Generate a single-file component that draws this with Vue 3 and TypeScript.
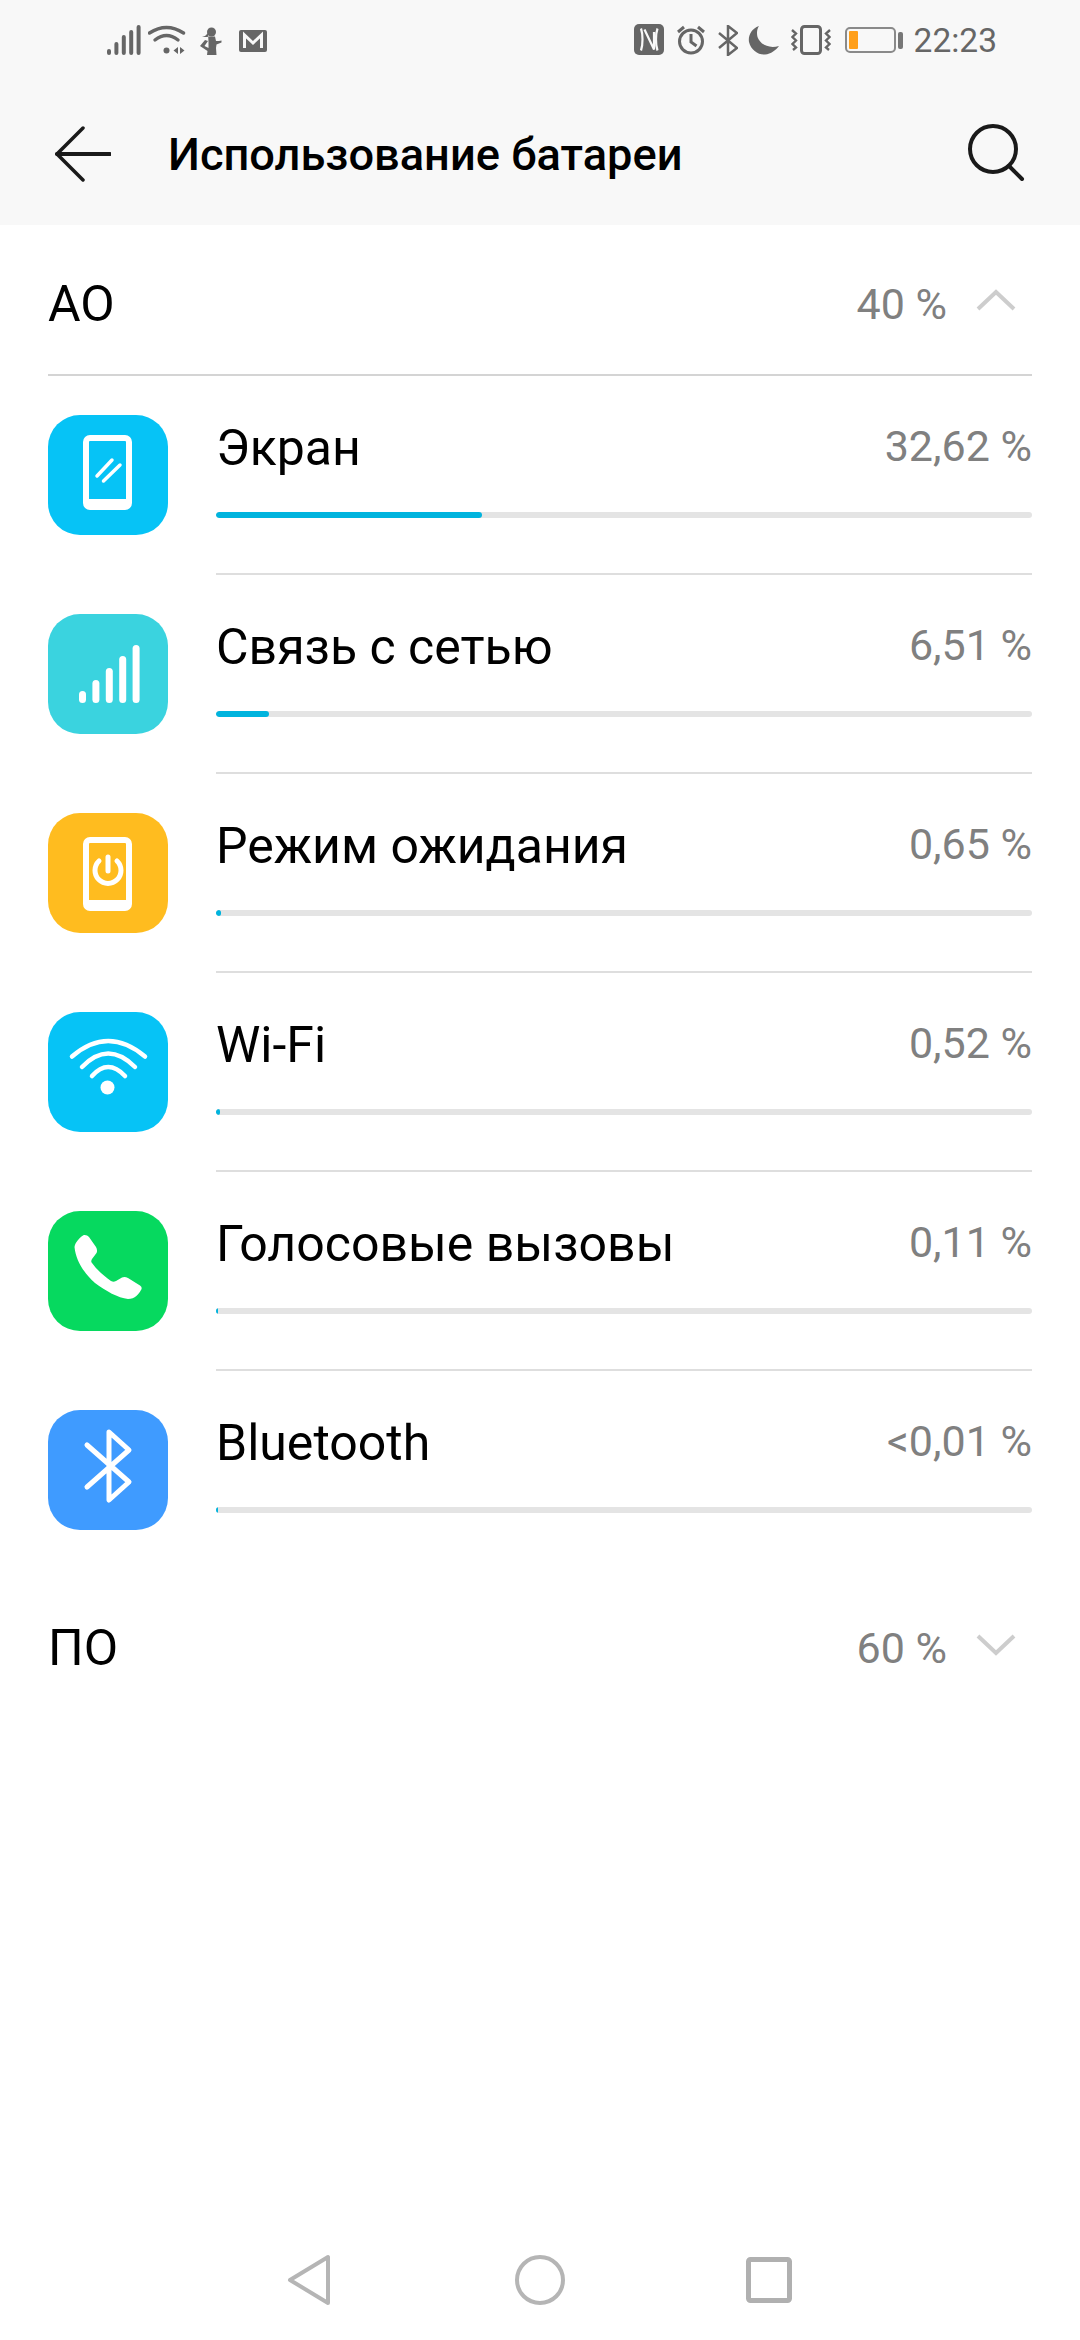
<template>
  <div class="screen">
    <div class="top">
      <div class="status">
        <div class="status-left">
          <svg class="si" width="34" height="32" viewBox="0 0 34 32">
            <rect v-for="(h, i) in signalBars" :key="i" :x="i * 7.4" :y="31 - h" width="4" :height="h" rx="2" fill="#666" />
          </svg>
          <svg class="si wifi-s" width="38" height="32" viewBox="0 0 38 32" fill="none" stroke="#666" stroke-width="3.4">
            <path d="M1.5 9Q18.5-2 35.5 9" stroke-linecap="round" />
            <path d="M7 16Q18.5 7 30 16" stroke-linecap="round" />
            <circle cx="18.5" cy="26.5" r="3" fill="#666" stroke="none" />
            <path d="M30 23v7l-4.500-3.500zM32 23v7l4.500-3.500z" fill="#666" stroke="none" />
          </svg>
          <svg class="si fig" width="22" height="28" viewBox="0 0 22 28">
            <circle cx="11.500" cy="5" r="4.500" fill="#666" />
            <path d="M8 6 5 9 2 10 7 10 9 9.500 15 9.500 16 14 19 14 21.500 13.500 21.500 15.500 16.500 17.500 16 21 16.500 28 7 28 7.500 24 0 19 5 13 8 14 4.500 19 8.500 21 8.500 15Z" fill="#666" />
          </svg>
          <svg class="si mail" width="28" height="22" viewBox="0 0 28 22">
            <rect width="28" height="22" rx="2" fill="#666" />
            <path d="M5.500 18V5L14 13 22.500 5V18" fill="none" stroke="#f8f8f8" stroke-width="3" />
          </svg>
        </div>
        <div class="status-right">
          <svg width="30" height="31" viewBox="0 0 30 31">
            <rect width="30" height="31" rx="5" fill="#666" />
            <path d="M7 4.500C9 10 9 21 7 26.500M10.500 5.500 20 25.500V8M23.500 4.500C21.500 10 21.500 21 23.500 26.500" fill="none" stroke="#f8f8f8" stroke-width="2.200" />
          </svg>
          <svg class="alarm" width="30" height="30" viewBox="0 0 30 30" fill="none" stroke="#666">
            <circle cx="15" cy="16.500" r="11.500" stroke-width="3" />
            <path d="M15 9v8l5.500 4M2 7l6-5M28 7l-6-5" stroke-width="3" />
          </svg>
          <svg class="bt" width="20" height="31" viewBox="0 0 20 31" fill="none" stroke="#666" stroke-width="2.500">
            <path d="M1 8 19 23 10 30V1L19 8 1 23" />
          </svg>
          <svg class="moon" width="31" height="30" viewBox="0 0 31 30">
            <path d="M11 1C3 4 0 11 1 17 3 25 10 30 17 29.500 23 29 28 25 31 21 20 24 12 19 9.500 12 8.500 8 9 4 11 1Z" fill="#666" />
          </svg>
          <svg class="vib" width="40" height="30" viewBox="0 0 40 30" fill="none" stroke="#666" stroke-width="3">
            <rect x="10.500" y="1.500" width="19" height="27" rx="3" />
            <path d="M1 5 5 8.500 1.500 12 5 15.500 1.500 19 5 22.500 2 25M39 5 35 8.500 38.500 12 35 15.500 38.500 19 35 22.500 38 25" stroke-width="2.400" />
          </svg>
          <div class="battery">
            <div class="battery-body"><div class="battery-fill" /></div>
            <div class="battery-tip" />
          </div>
          <span class="clock">22:23</span>
        </div>
      </div>
      <div class="toolbar">
        <svg class="back" width="56" height="56" viewBox="0 0 56 56" fill="none" stroke="#1a1a1a" stroke-width="4" stroke-linecap="round">
          <path d="M28 2 2 28 28 54" stroke-width="3.500" />
          <path d="M2 28H55" />
        </svg>
        <h1 class="title">Использование батареи</h1>
        <svg class="search" width="58" height="58" viewBox="0 0 58 58" fill="none" stroke="#1a1a1a" stroke-width="4" stroke-linecap="round">
          <circle cx="26" cy="26" r="23" />
          <path d="M42 43 55 56" />
        </svg>
      </div>
    </div>

    <div class="section-head first">
      <span class="section-name">АО</span>
      <span class="section-value">40 %</span>
      <svg class="chev up" width="40" height="22" viewBox="0 0 40 22" fill="none" stroke="#cdcdcd" stroke-width="4">
        <path d="M2 20 20 3 38 20" />
      </svg>
    </div>

    <div class="list">
      <div v-for="item in items" :key="item.name" class="row">
        <div class="app-icon" :style="{ background: item.color }">
          <svg v-if="item.icon === 'screen'" width="120" height="120" viewBox="0 0 120 120" fill="none" stroke="#fff">
            <rect x="38" y="23" width="43" height="69" rx="4" stroke-width="6" />
            <path d="M38 88H81" stroke-width="8" />
            <path d="M49 61 64 45M55.500 66 72 50" stroke-width="3.500" stroke-linecap="round" />
          </svg>
          <svg v-else-if="item.icon === 'signal'" width="120" height="120" viewBox="0 0 120 120">
            <rect v-for="(b, i) in networkBars" :key="i" :x="31 + i * 13.400" :y="89 - b" width="7" :height="b" rx="3.500" fill="#fff" />
          </svg>
          <svg v-else-if="item.icon === 'standby'" width="120" height="120" viewBox="0 0 120 120" fill="none" stroke="#fff">
            <rect x="38" y="27" width="43" height="68" rx="4" stroke-width="6" />
            <path d="M38 91H81" stroke-width="8" />
            <path d="M51 48A13 13 0 1 0 69 48" stroke-width="5" stroke-linecap="round" />
            <path d="M60 44V58" stroke-width="5" stroke-linecap="round" />
          </svg>
          <svg v-else-if="item.icon === 'wifi'" width="120" height="120" viewBox="0 0 120 120" fill="none" stroke="#fff" stroke-width="4.500" stroke-linecap="round">
            <path d="M24 44.500Q60 13.500 97 44.500" />
            <path d="M34 55Q60 28 87 55" />
            <path d="M44 64Q60 46 77 64" />
            <circle cx="59.500" cy="75.500" r="7" fill="#fff" stroke="none" />
          </svg>
          <svg v-else-if="item.icon === 'phone'" width="120" height="120" viewBox="0 0 120 120">
            <path d="M26.500 36C27 32 31 27 35 24.500 37 23.500 39.500 24.500 41 26L48 36C49 38 49.500 40 48.500 42L44 48C43 50 43 51 44 52 49 59 56 65 63 70 65 71 66 71 68 70L74 66.500C76 65.500 78 66 80 67L92 74.500C94 76 94 77.500 93 79 91 83 87 88 80 88 70 87 58 80 47 72 36 62 28 50 26.500 36Z" fill="#fff" />
          </svg>
          <svg v-else width="120" height="120" viewBox="0 0 120 120" fill="none" stroke="#fff" stroke-width="5" stroke-linecap="round" stroke-linejoin="round">
            <path d="M39 35 81 72 61 90V22L81 40 39 77" />
          </svg>
        </div>
        <div class="row-body">
          <div class="row-text">
            <span class="row-name">{{ item.name }}</span>
            <span class="row-value">{{ item.value }}</span>
          </div>
          <div class="track">
            <div class="fill" :style="{ width: item.bar + '%' }" />
          </div>
        </div>
      </div>
    </div>

    <div class="section-head second">
      <span class="section-name">ПО</span>
      <span class="section-value">60 %</span>
      <svg class="chev down" width="40" height="22" viewBox="0 0 40 22" fill="none" stroke="#cdcdcd" stroke-width="4">
        <path d="M2 2 20 19 38 2" />
      </svg>
    </div>

    <div class="nav">
      <svg width="44" height="52" viewBox="0 0 44 52" fill="none" stroke="#b5b5b5" stroke-width="4" stroke-linejoin="round">
        <path d="M41 3V49L3 26Z" />
      </svg>
      <svg class="nav-home" width="52" height="52" viewBox="0 0 52 52" fill="none" stroke="#b5b5b5" stroke-width="4">
        <circle cx="26" cy="26" r="23" />
      </svg>
      <svg class="nav-recent" width="46" height="46" viewBox="0 0 46 46" fill="none" stroke="#b0b0b0" stroke-width="5">
        <rect x="2.500" y="2.500" width="41" height="41" rx="2" />
      </svg>
    </div>
  </div>
</template>

<script setup lang="ts">
interface UsageItem {
  name: string
  value: string
  bar: number
  color: string
  icon: string
}

const signalBars = [6, 13, 20, 25, 30]
const networkBars = [12, 23, 35, 47, 58]

const items: UsageItem[] = [
  { name: 'Экран', value: '32,62 %', bar: 32.62, color: '#06c3f6', icon: 'screen' },
  { name: 'Связь с сетью', value: '6,51 %', bar: 6.51, color: '#3ad3df', icon: 'signal' },
  { name: 'Режим ожидания', value: '0,65 %', bar: 0.65, color: '#ffbc1f', icon: 'standby' },
  { name: 'Wi-Fi', value: '0,52 %', bar: 0.52, color: '#06c3f6', icon: 'wifi' },
  { name: 'Голосовые вызовы', value: '0,11 %', bar: 0.11, color: '#06d95f', icon: 'phone' },
  { name: 'Bluetooth', value: '<0,01 %', bar: 0.1, color: '#3f9bff', icon: 'bluetooth' }
]
</script>

<style>
html, body {
  margin: 0;
  background: #fff;
}
</style>

<style scoped>
.screen {
  width: 1080px;
  height: 2340px;
  display: flex;
  flex-direction: column;
  background: #fff;
  font-family: Roboto, "Noto Sans", sans-serif;
  overflow: hidden;
}

.top {
  height: 225px;
  background: #f8f8f8;
}

.status {
  height: 90px;
  display: flex;
  justify-content: space-between;
  align-items: flex-start;
  padding: 24px 83px 0 107px;
  box-sizing: border-box;
}

.status-left,
.status-right {
  display: flex;
  align-items: flex-start;
}

.si { display: block; }
.wifi-s { margin-left: 7px; }
.fig { margin: 3px 0 0 14px; }
.mail { margin: 6px 0 0 17px; }

.alarm { margin: 1px 0 0 12px; }
.bt { margin: 1px 0 0 12px; }
.moon { margin: 1px 0 0 10px; }
.vib { margin: 1px 0 0 12px; }

.battery {
  display: flex;
  align-items: center;
  height: 26px;
  margin: 3px 0 0 14px;
}

.battery-body {
  width: 51px;
  height: 26px;
  box-sizing: border-box;
  border: 2px solid #8a8a8a;
  border-radius: 5px;
  padding: 2px;
}

.battery-fill {
  width: 9px;
  height: 100%;
  background: #ff9f1a;
  border-radius: 1px;
}

.battery-tip {
  width: 5px;
  height: 17px;
  margin-left: 2px;
  background: #777;
  border-radius: 2px;
}

.clock {
  margin-left: 11px;
  font-size: 33.500px;
  line-height: 34px;
  color: #666;
}

.toolbar {
  display: flex;
  align-items: center;
  height: 135px;
  padding: 0 55px 0 55px;
  box-sizing: border-box;
}

.back { margin-top: -8px; }

.title {
  flex: 1;
  margin: -6px 0 0 57px;
  font-size: 45.200px;
  font-weight: 500;
  color: #000;
}

.search { margin-top: -12px; }

.section-head {
  display: flex;
  align-items: center;
  margin: 0 48px;
  box-sizing: border-box;
}

.section-head.first {
  height: 151px;
  border-bottom: 2px solid #d4d4d4;
  padding-top: 9px;
}

.section-head.second {
  height: 80px;
  margin-top: 38px;
}

.section-name {
  flex: 1;
  font-size: 50px;
  color: #000;
}

.section-value {
  font-size: 43px;
  color: #808080;
}

.chev {
  margin: 0 16px 0 29px;
}

.chev.up { margin-bottom: 9px; }
.chev.down { margin-bottom: 7px; }

.row {
  display: flex;
  height: 199px;
}

.app-icon {
  flex: none;
  width: 120px;
  height: 120px;
  margin: 39px 48px 0;
  border-radius: 32px;
}

.app-icon svg { display: block; }

.row-body {
  flex: 1;
  margin-right: 48px;
  border-bottom: 2px solid #dedede;
  box-sizing: border-box;
}

.row:last-child .row-body { border-bottom: none; }

.row-text {
  display: flex;
  justify-content: space-between;
  align-items: center;
  height: 54px;
  margin-top: 45px;
}

.row-name {
  font-size: 50px;
  color: #000;
}

.row-value {
  font-size: 43px;
  color: #808080;
  margin-top: -4px;
}

.track {
  height: 6px;
  margin-top: 37px;
  background: #e4e4e4;
  border-radius: 3px;
  overflow: hidden;
}

.fill {
  height: 100%;
  min-width: 2px;
  background: #00b4de;
  border-radius: 3px;
}

.nav {
  margin-top: auto;
  height: 136px;
  box-sizing: border-box;
  display: flex;
  align-items: flex-start;
  padding: 50px 0 0 287px;
}

.nav-home { margin-left: 183px; }
.nav-recent { margin: 3px 0 0 180px; }
</style>
